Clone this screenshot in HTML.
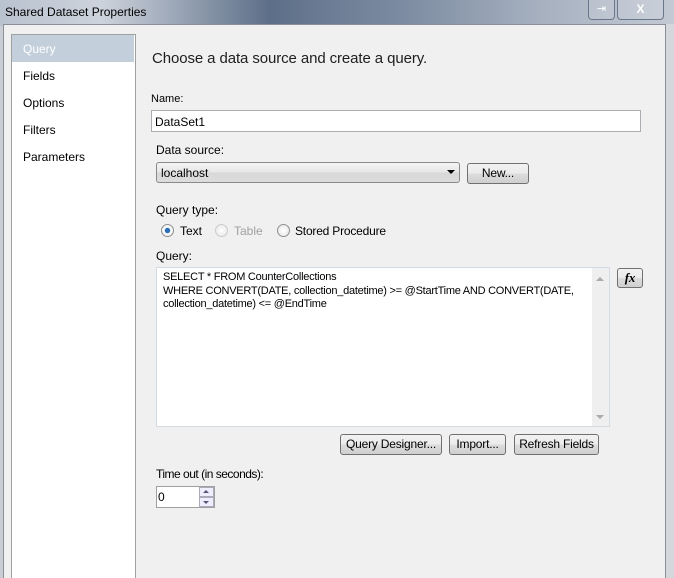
<!DOCTYPE html>
<html><head><style>
*{box-sizing:border-box;margin:0;padding:0}
html,body{width:674px;height:578px;overflow:hidden}
body{position:relative;font-family:"Liberation Sans",sans-serif;font-size:11px;color:#000;background:#c9ced6}
.a{position:absolute}
.title{left:0;top:0;width:674px;height:26px;background:linear-gradient(90deg,#b9c2cf 0%,#cdd3dc 15%,#5d6f88 40%,#7d8ca2 60%,#a6b0bf 80%,#c3cad4 100%)}
.body{left:3px;top:24px;width:663px;height:560px;background:#f0f0f0;border:1px solid #8a8f96;border-bottom:none}
.right{left:666px;top:24px;width:8px;height:560px;background:#d4d7dc}
.inp{background:#fff;border:1px solid #abadb3}
.btn{background:linear-gradient(#f2f2f2,#ebebeb 50%,#dddddd 50%,#cfcfcf);border:1px solid #707070;border-radius:3px;text-align:center;line-height:19px;letter-spacing:-0.2px}
.radio{width:13px;height:13px;border-radius:50%;border:1px solid #8e8f8f;background:radial-gradient(#fff,#e4e4e4)}
</style></head><body>
<div class="a title"></div>
<div class="a" style="left:5px;top:5px;font-size:12px;color:#000">Shared Dataset Properties</div>
<div class="a" style="left:588px;top:0;width:27px;height:20px;border:1px solid #6a7689;border-top:none;border-radius:0 0 4px 4px;background:rgba(255,255,255,.12);color:#fff;text-align:center;font-size:11px;line-height:18px">⇥</div>
<div class="a" style="left:617px;top:0;width:47px;height:20px;border:1px solid #6a7689;border-top:none;border-radius:0 0 4px 4px;background:rgba(255,255,255,.12);color:#fff;text-align:center;font-weight:bold;font-size:12px;line-height:18px">X</div>
<div class="a body"></div>
<div class="a right"></div>
<div class="a" style="left:11px;top:34px;width:125px;height:560px;background:#fff;border:1px solid #a0a0a0"></div>
<div class="a" style="left:12px;top:35px;width:122px;height:27px;background:#c3cfdb"></div>
<div class="a" style="left:23px;top:42px;color:#fff;font-size:12px">Query</div>
<div class="a" style="left:23px;top:69px;font-size:12px">Fields</div>
<div class="a" style="left:23px;top:96px;font-size:12px">Options</div>
<div class="a" style="left:23px;top:123px;font-size:12px">Filters</div>
<div class="a" style="left:23px;top:150px;font-size:12px">Parameters</div>

<div class="a" style="left:152px;top:50px;font-size:15px;color:#1e1e1e;letter-spacing:-0.1px">Choose a data source and create a query.</div>
<div class="a" style="left:151px;top:93px">Name:</div>
<div class="a inp" style="left:151px;top:110px;width:490px;height:22px;padding:4px 3px;font-size:12px">DataSet1</div>
<div class="a" style="left:156px;top:143px;font-size:12px">Data source:</div>
<div class="a" style="left:156px;top:162px;width:304px;height:21px;border:1px solid #8a8a8a;border-radius:3px;background:linear-gradient(#f4f4f4,#e6e6e6 50%,#d8d8d8 50%,#dcdcdc);padding:3px 4px;font-size:12px">localhost</div>
<div class="a" style="left:447px;top:170px;width:0;height:0;border-left:4px solid transparent;border-right:4px solid transparent;border-top:4px solid #000"></div>
<div class="a btn" style="left:467px;top:163px;width:62px;height:21px;font-size:12px">New...</div>
<div class="a" style="left:156px;top:203px;font-size:12px">Query type:</div>
<div class="a radio" style="left:161px;top:224px;background:radial-gradient(#2a6fb3 30%,#fff 40%,#e4e4e4)"></div>
<div class="a" style="left:180px;top:224px;font-size:12px">Text</div>
<div class="a radio" style="left:215px;top:224px;border-color:#ccc"></div>
<div class="a" style="left:234px;top:224px;font-size:12px;color:#a0a0a0">Table</div>
<div class="a radio" style="left:277px;top:224px"></div>
<div class="a" style="left:295px;top:224px;font-size:12px;letter-spacing:-0.2px">Stored Procedure</div>
<div class="a" style="left:156px;top:249px;font-size:12px">Query:</div>
<div class="a inp" style="left:156px;top:267px;width:454px;height:160px;border-color:#d5dbe3;padding:3px 6px;font-size:11px;line-height:13.5px;letter-spacing:-0.25px">SELECT * FROM CounterCollections<br>WHERE CONVERT(DATE, collection_datetime) &gt;= @StartTime AND CONVERT(DATE,<br>collection_datetime) &lt;= @EndTime</div>
<div class="a" style="left:592px;top:268px;width:17px;height:158px;background:#efefef"></div>
<div class="a" style="left:596px;top:277px;border-left:4px solid transparent;border-right:4px solid transparent;border-bottom:4px solid #aaa"></div>
<div class="a" style="left:596px;top:415px;border-left:4px solid transparent;border-right:4px solid transparent;border-top:4px solid #aaa"></div>
<div class="a btn" style="left:617px;top:268px;width:26px;height:20px;font-family:'Liberation Serif',serif;font-style:italic;font-weight:bold;font-size:13px;line-height:18px">fx</div>
<div class="a btn" style="left:340px;top:434px;width:102px;height:21px;font-size:12px">Query Designer...</div>
<div class="a btn" style="left:449px;top:434px;width:57px;height:21px;font-size:12px">Import...</div>
<div class="a btn" style="left:514px;top:434px;width:85px;height:21px;font-size:12px">Refresh Fields</div>
<div class="a" style="left:156px;top:467px;font-size:12px;letter-spacing:-0.5px">Time out (in seconds):</div>
<div class="a inp" style="left:156px;top:486px;width:59px;height:22px;border-color:#a0a0a0;padding:3px 1px;font-size:12px">0</div>
<div class="a" style="left:199px;top:487px;width:15px;height:10px;border:1px solid #aab;background:#eef"></div>
<div class="a" style="left:199px;top:497px;width:15px;height:10px;border:1px solid #aab;background:#eef"></div>
<div class="a" style="left:203px;top:490px;border-left:3px solid transparent;border-right:3px solid transparent;border-bottom:3px solid #557"></div>
<div class="a" style="left:203px;top:501px;border-left:3px solid transparent;border-right:3px solid transparent;border-top:3px solid #557"></div>
</body></html>
